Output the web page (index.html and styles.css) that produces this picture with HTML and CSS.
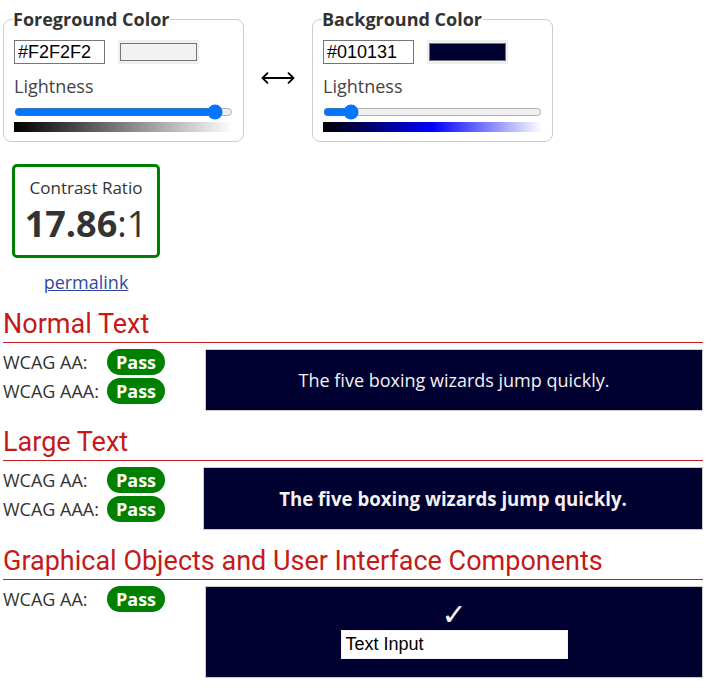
FILE: index.html
```html
<!DOCTYPE html>
<html lang="en">
<head>
<meta charset="utf-8">
<title>Contrast Checker</title>
<link rel="stylesheet" href="styles.css">
</head>
<body>
<div class="page">
  <div class="pickers">
    <fieldset class="picker">
      <legend>Foreground Color</legend>
      <div class="hexrow">
        <input class="hex" type="text" value="#F2F2F2" aria-label="Foreground hex">
        <div class="swatch"><div class="swatch-inner fg"></div></div>
      </div>
      <div class="label">Lightness</div>
      <input class="range" type="range" min="0" max="100" value="95" aria-label="Foreground lightness">
      <div class="grad grad-fg"></div>
    </fieldset>
    <div class="swap" aria-label="Swap colors">
      <svg width="34" height="12" viewBox="0 0 34 12"><path d="M1.5 6H32.5M6.5 1.2L1.5 6L6.5 10.8M27.5 1.2L32.5 6L27.5 10.8" fill="none" stroke="#000" stroke-width="1.8" stroke-linecap="round" stroke-linejoin="round"/></svg>
    </div>
    <fieldset class="picker">
      <legend>Background Color</legend>
      <div class="hexrow">
        <input class="hex" type="text" value="#010131" aria-label="Background hex">
        <div class="swatch"><div class="swatch-inner bg"></div></div>
      </div>
      <div class="label">Lightness</div>
      <input class="range" type="range" min="0" max="100" value="10" aria-label="Background lightness">
      <div class="grad grad-bg"></div>
    </fieldset>
  </div>

  <div class="ratio">
    <div class="ratio-label">Contrast Ratio</div>
    <div class="ratio-value"><b>17.86</b>:1</div>
  </div>
  <div class="permalink"><a href="#">permalink</a></div>

  <h2>Normal Text</h2>
  <div class="result">
    <div class="checks">
      <div class="check"><span class="clabel">WCAG AA:</span><span class="pass">Pass</span></div>
      <div class="check"><span class="clabel">WCAG AAA:</span><span class="pass">Pass</span></div>
    </div>
    <div class="sample normal">The five boxing wizards jump quickly.</div>
  </div>

  <h2>Large Text</h2>
  <div class="result">
    <div class="checks narrow">
      <div class="check"><span class="clabel">WCAG AA:</span><span class="pass">Pass</span></div>
      <div class="check"><span class="clabel">WCAG AAA:</span><span class="pass">Pass</span></div>
    </div>
    <div class="sample large">The five boxing wizards jump quickly.</div>
  </div>

  <h2>Graphical Objects and User Interface Components</h2>
  <div class="result">
    <div class="checks">
      <div class="check"><span class="clabel">WCAG AA:</span><span class="pass">Pass</span></div>
    </div>
    <div class="sample graphic">
      <div class="checkmark">&#10003;</div>
      <div class="textinput">Text Input</div>
    </div>
  </div>
</div>
</body>
</html>
```
FILE: styles.css
```css
html, body {
  margin: 0;
  padding: 0;
  background: #fff;
}
body {
  font-family: "Open Sans", "DejaVu Sans", sans-serif;
  font-size: 18px;
  color: #333;
}
.page {
  width: 700px;
  padding: 0 3px;
}
.pickers {
  display: flex;
  align-items: flex-start;
  padding-top: 8px;
}
.picker {
  width: 241px;
  box-sizing: border-box;
  margin: 0;
  border: 1px solid #ccc;
  border-radius: 8px;
  padding: 9px 10px 9px 10px;
  min-width: 0;
}
.picker legend {
  font-weight: 700;
  font-size: 18px;
  line-height: 23px;
  padding: 0 1px 0 0;
  margin-left: -1px;
  color: #333;
}
.hexrow {
  display: flex;
  align-items: center;
  gap: 13px;
}
.hex {
  width: 91px;
  height: 24px;
  box-sizing: border-box;
  border: 1px solid #767676;
  margin: 0;
  padding: 0 3px;
  font-family: "Liberation Sans", Arial, sans-serif;
  font-size: 18px;
  color: #000;
  background: #fff;
}
.swatch {
  width: 81px;
  height: 24px;
  box-sizing: border-box;
  background: #efefef;
  padding: 3px 2px;
}
.swatch-inner {
  height: 100%;
  box-sizing: border-box;
  border: 1px solid #777;
}
.swatch-inner.fg { background: #f2f2f2; }
.swatch-inner.bg { background: #010131; }
.label {
  margin-top: 10px;
  line-height: 24px;
  color: #444;
}
.range {
  display: block;
  width: 219px;
  height: 16px;
  margin: 6px 0 2px 0;
  padding: 0;
}
.grad {
  width: 219px;
  height: 10px;
}
.grad-fg { background: linear-gradient(to right, #000, #fff); }
.grad-bg { background: linear-gradient(to right, #000, #0000ff 50%, #fff); }
.swap {
  width: 68px;
  display: flex;
  justify-content: center;
  margin-top: 64px;
}
.swap svg { display: block; }

.ratio {
  margin: 22px 0 0 9px;
  width: 148px;
  height: 94px;
  box-sizing: border-box;
  border: 3px solid #008000;
  border-radius: 5px;
  text-align: center;
  padding-top: 8px;
}
.ratio-label {
  font-size: 17px;
  line-height: 26px;
}
.ratio-value {
  font-size: 36px;
  line-height: 44px;
  margin-top: 1px;
}
.ratio-value b { font-weight: 700; }
.permalink {
  width: 166px;
  text-align: center;
  margin-top: 11px;
  line-height: 26px;
}
.permalink a {
  color: #2e4a9e;
  text-decoration: underline;
}

h2 {
  font-family: Roboto, "Open Sans", sans-serif;
  font-weight: 400;
  font-size: 27px;
  line-height: 31px;
  color: #c41a1a;
  margin: 0;
  padding: 0 0 2px 0;
  border-bottom: 1px solid #c41a1a;
}
.permalink + h2 { margin-top: 14px; }
.result {
  display: flex;
  padding-top: 6px;
  margin-bottom: 16px;
}
.checks {
  width: 202px;
  flex: none;
}
.checks.narrow { width: 200px; }
.check {
  display: flex;
  align-items: center;
  height: 26px;
  margin-bottom: 3px;
}
.clabel {
  width: 104px;
  flex: none;
}
.pass {
  display: inline-block;
  background: #008000;
  color: #fff;
  font-weight: 700;
  font-size: 18px;
  line-height: 26px;
  height: 26px;
  padding: 0 9px;
  border-radius: 13px;
}
.sample {
  flex: 1;
  background: #010131;
  color: #f2f2f2;
  border: 1px solid #ccc;
  display: flex;
  align-items: center;
  justify-content: center;
}
.sample.normal {
  height: 62px;
  box-sizing: border-box;
  font-size: 18px;
}
.sample.large {
  height: 63px;
  box-sizing: border-box;
  font-size: 18.66px;
  font-weight: 700;
}
.sample.graphic {
  height: 92px;
  box-sizing: border-box;
  flex-direction: column;
  justify-content: flex-start;
  padding-top: 13px;
}
.checkmark {
  font-family: "DejaVu Sans", sans-serif;
  font-size: 30px;
  line-height: 30px;
  color: #f2f2f2;
}
.textinput {
  width: 227px;
  height: 29px;
  box-sizing: border-box;
  background: #fff;
  border: 1px solid #f2f2f2;
  color: #000;
  font-family: "Liberation Sans", Arial, sans-serif;
  font-size: 18px;
  line-height: 27px;
  padding-left: 4px;
}
```
